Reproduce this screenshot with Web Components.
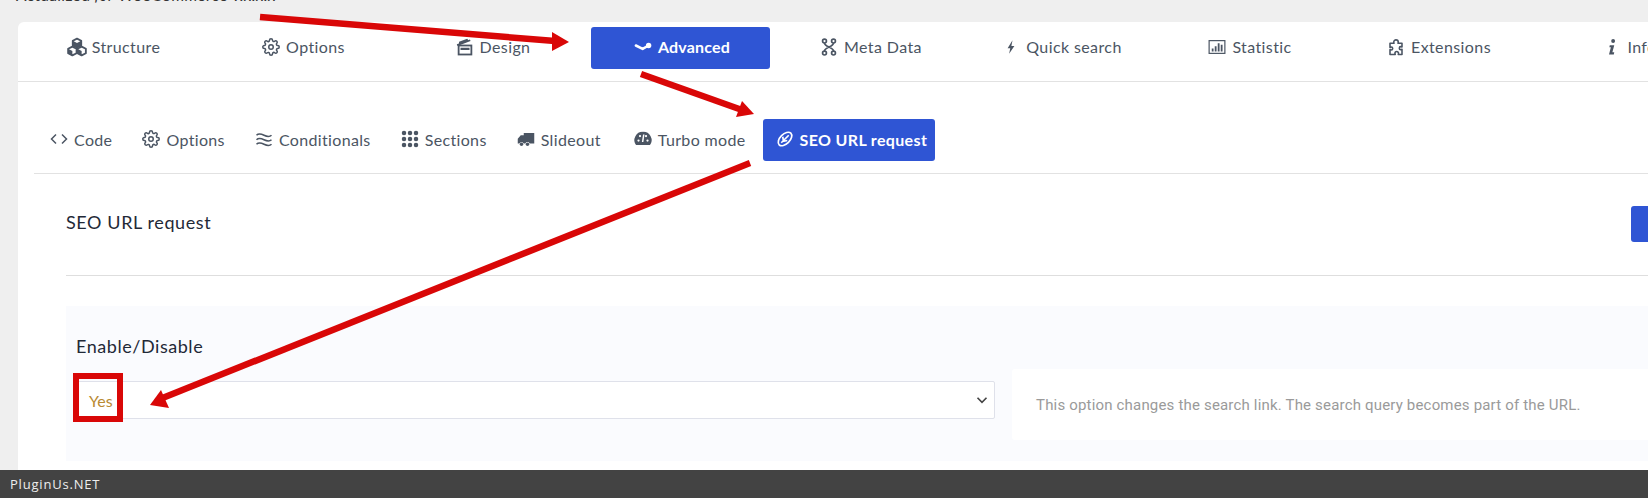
<!DOCTYPE html>
<html>
<head>
<meta charset="utf-8">
<title>SEO URL request</title>
<style>
html, body { margin: 0; height: 498px; overflow: hidden; background: #efefef; }
</style>
</head>
<body>
<plugin-page>
    <div slot="title">Actualized <i>for</i> WooCommerce v.x.x.x</div>
    <main-tabs>
        <nav-tab icon="cubes" style="--w:192px">Structure</nav-tab>
        <nav-tab icon="cog" style="--w:187px">Options</nav-tab>
        <nav-tab icon="clapper" style="--w:192px">Design</nav-tab>
        <nav-tab icon="advanced" active style="--w:179px;--ml:2px">Advanced</nav-tab>
        <nav-tab icon="diagram" style="--w:202px">Meta Data</nav-tab>
        <nav-tab icon="bolt" style="--w:180px">Quick search</nav-tab>
        <nav-tab icon="chart" style="--w:196px">Statistic</nav-tab>
        <nav-tab icon="puzzle" style="--w:182px">Extensions</nav-tab>
        <nav-tab icon="info" style="--w:200px">Info</nav-tab>
    </main-tabs>
    <sub-tabs>
        <sub-tab icon="code">Code</sub-tab>
        <sub-tab icon="cog">Options</sub-tab>
        <sub-tab icon="water">Conditionals</sub-tab>
        <sub-tab icon="dots">Sections</sub-tab>
        <sub-tab icon="truck">Slideout</sub-tab>
        <sub-tab icon="gauge" style="--ml:3px">Turbo mode</sub-tab>
        <sub-tab icon="link" active>SEO URL request</sub-tab>
    </sub-tabs>
    <section-head>SEO URL request</section-head>
    <option-row label="Enable/Disable" value="Yes">This option changes the search link. The search query becomes part of the URL.</option-row>
    <footer-bar slot="footer">PluginUs.NET</footer-bar>
    <arrow-layer slot="overlay"></arrow-layer>
</plugin-page>

<script>
// Icon paths, all on a 24x24 box
const ICONS = {
    cubes: '<g transform="translate(-1.5 -1.5) scale(1.125)"><g fill="none" stroke="currentColor" stroke-width="2.2" stroke-linejoin="round"><path d="M12 2l5 2.6v5.4l-5 2.6-5-2.6V4.6z"/><path d="M6.5 11.5l5 2.6v5.3l-5 2.6-5-2.6v-5.3z"/><path d="M17.5 11.5l5 2.6v5.3l-5 2.6-5-2.6v-5.3z"/></g><path fill="currentColor" d="M7 4.6l5 2.6 5-2.6v5.4l-5 2.6-5-2.6zM1.5 14.1l5 2.6v5.3l-5-2.6zM12.5 14.1l5 2.6v5.3l-5-2.6z"/></g>',
    cog: '<g fill="none" stroke="currentColor" stroke-width="2"><circle cx="12" cy="12" r="3"/><path d="M19.4 15a1.65 1.65 0 0 0 .33 1.82l.06.06a2 2 0 0 1 0 2.83 2 2 0 0 1-2.83 0l-.06-.06a1.65 1.65 0 0 0-1.82-.33 1.65 1.65 0 0 0-1 1.51V21a2 2 0 0 1-2 2 2 2 0 0 1-2-2v-.09A1.65 1.65 0 0 0 9 19.4a1.65 1.65 0 0 0-1.82.33l-.06.06a2 2 0 0 1-2.83 0 2 2 0 0 1 0-2.83l.06-.06a1.65 1.65 0 0 0 .33-1.82 1.65 1.65 0 0 0-1.51-1H3a2 2 0 0 1-2-2 2 2 0 0 1 2-2h.09A1.65 1.65 0 0 0 4.6 9a1.65 1.65 0 0 0-.33-1.82l-.06-.06a2 2 0 0 1 0-2.83 2 2 0 0 1 2.83 0l.06.06a1.65 1.65 0 0 0 1.82.33H9a1.65 1.65 0 0 0 1-1.51V3a2 2 0 0 1 2-2 2 2 0 0 1 2 2v.09a1.65 1.65 0 0 0 1 1.51 1.65 1.65 0 0 0 1.82-.33l.06-.06a2 2 0 0 1 2.83 0 2 2 0 0 1 0 2.83l-.06.06a1.65 1.65 0 0 0-.33 1.82V9a1.65 1.65 0 0 0 1.51 1H21a2 2 0 0 1 2 2 2 2 0 0 1-2 2h-.09a1.65 1.65 0 0 0-1.51 1z"/></g>',
    clapper: '<g fill="none" stroke="currentColor" stroke-width="2.4"><rect x="3.5" y="10" width="17" height="12"/><path d="M1.5 9.5L19 3"/></g><path fill="currentColor" d="M6 13h12v3H6zM4 5l11-4 2 3-13 5z"/>',
    advanced: '<path fill="none" stroke="currentColor" stroke-width="3.4" stroke-linecap="round" stroke-linejoin="round" d="M2.5 10l9 4.5 8-4.5"/><circle cx="19.5" cy="10" r="3.6" fill="currentColor"/>',
    diagram: '<g fill="none" stroke="currentColor" stroke-width="2.2"><circle cx="6" cy="4" r="2.6"/><circle cx="18" cy="4" r="2.6"/><circle cx="6" cy="20" r="2.6"/><circle cx="18" cy="20" r="2.6"/><path d="M6 6.6c0 5 12 6 12 10.8M18 6.6c0 5-12 6-12 10.8"/></g>',
    bolt: '<path fill="currentColor" d="M14 3L7.5 13.5H11L9.5 21l7-10.5h-4z"/>',
    chart: '<g fill="none" stroke="currentColor" stroke-width="1.6"><rect x="1.5" y="3.5" width="21" height="17"/></g><path fill="currentColor" d="M5 14h2.4v4H5zM9 11h2.4v7H9zM13 7h2.4v11H13zM17 9h2.4v9H17z"/>',
    puzzle: '<path fill="none" stroke="currentColor" stroke-width="2.1" stroke-linejoin="round" d="M9 5.5a3 3 0 1 1 6 0c0 .8-.4 1-.4 1.5h5.4v5c-.6 0-1-.5-1.6-.5a2 2 0 0 0 0 4c.6 0 1-.5 1.6-.5V22h-5c0-.5.4-1 .4-1.5a2.4 2.4 0 0 0-4.8 0c0 .5.4 1 .4 1.5H4v-6.5c.6 0 1 .5 1.6.5a2 2 0 0 0 0-4c-.6 0-1 .5-1.6.5V7h5.4c0-.5-.4-.7-.4-1.5z"/>',
    info: '<circle cx="13.5" cy="4" r="2.6" fill="currentColor"/><path fill="currentColor" d="M9 9.5h6l-2.5 9.5H15l-.6 3H8l2.5-9.8H8.500z"/>',
    code: '<path fill="none" stroke="currentColor" stroke-width="2" d="M8 6l-6 6 6 6M16 6l6 6-6 6"/>',
    water: '<path fill="none" stroke="currentColor" stroke-width="2" d="M2 7c3-3 6-2 10 0s7 3 10 0M2 13c3-3 6-2 10 0s7 3 10 0M2 19c3-3 6-2 10 0s7 3 10 0"/>',
    dots: '<g fill="currentColor"><circle cx="4" cy="4" r="3"/><circle cx="12" cy="4" r="3"/><circle cx="20" cy="4" r="3"/><circle cx="4" cy="12" r="3"/><circle cx="12" cy="12" r="3"/><circle cx="20" cy="12" r="3"/><circle cx="4" cy="20" r="3"/><circle cx="12" cy="20" r="3"/><circle cx="20" cy="20" r="3"/></g>',
    truck: '<path fill="currentColor" d="M9 4h14v14h-6.2a3 3 0 0 0-5.6 0H8.800a3 3 0 0 0-4.300-1.500 3 3 0 0 0-1.300 1.500H1v-6.500L5 7h4z"/><circle cx="6" cy="19" r="2.3" fill="currentColor"/><circle cx="14" cy="19" r="2.3" fill="currentColor"/>',
    gauge: '<path fill="currentColor" d="M12 2.500a11 11 0 0 0-9.300 17.500h18.600A11 11 0 0 0 12 2.500z"/><g fill="#fff"><circle cx="6" cy="14" r="1.500"/><circle cx="8" cy="8" r="1.500"/><circle cx="16" cy="8" r="1.500"/><circle cx="18" cy="14" r="1.500"/></g><path stroke="#fff" stroke-width="2" d="M13 6l-1.500 10"/>',
    link: '<g fill="none" stroke="currentColor" stroke-width="2.2"><ellipse cx="12" cy="12" rx="11" ry="6.5" transform="rotate(-45 12 12)"/><path d="M7 17L17 7M9 9l1 6 5-1"/></g>'
};

class UiIcon extends HTMLElement {
    constructor() {
        super();
        this.attachShadow({ mode: 'open' });
    }

    connectedCallback() {
        const size = this.getAttribute('size') || 17;
        this.shadowRoot.innerHTML = `
        <style>
        :host { display: inline-flex; flex: none; }
        svg { display: block; overflow: visible; }
        </style>
        <svg width="${size}" height="${size}" viewBox="0 0 24 24">${ICONS[this.getAttribute('name')] || ''}</svg>
        `;
    }
}
customElements.define('ui-icon', UiIcon);

class PluginPage extends HTMLElement {
    constructor() {
        super();
        this.attachShadow({ mode: 'open' });
        this.shadowRoot.innerHTML = `
        <style>
        :host {
            display: flex;
            flex-direction: column;
            position: relative;
            width: 1648px;
            height: 498px;
            overflow: hidden;
            font-family: Lato, "Liberation Sans", sans-serif;
        }
        .title {
            flex: none;
            height: 35px;
            margin-top: -13px;
            padding-left: 16px;
            font: 15.5px/16px Lato, sans-serif;
            letter-spacing: .35px;
            color: #333;
        }
        .body {
            flex: 1;
            min-height: 0;
            overflow: hidden;
        }
        .card {
            width: 1780px;
            height: 100%;
            margin-left: 18px;
            background: #fff;
            border-radius: 6px 0 0 0;
        }
        </style>
        <div class="title"><slot name="title"></slot></div>
        <div class="body"><div class="card"><slot></slot></div></div>
        <slot name="footer"></slot>
        <slot name="overlay"></slot>
        `;
    }
}
customElements.define('plugin-page', PluginPage);

class MainTabs extends HTMLElement {
    constructor() {
        super();
        this.attachShadow({ mode: 'open' });
        this.shadowRoot.innerHTML = `
        <style>
        :host {
            display: flex;
            align-items: flex-start;
            height: 54px;
            padding-top: 5px;
            border-bottom: 1px solid #e2e2e2;
        }
        </style>
        <slot></slot>
        `;
    }
}
customElements.define('main-tabs', MainTabs);

class NavTab extends HTMLElement {
    constructor() {
        super();
        this.attachShadow({ mode: 'open' });
    }

    connectedCallback() {
        this.shadowRoot.innerHTML = `
        <style>
        :host {
            display: flex;
            flex: none;
            align-items: center;
            justify-content: center;
            gap: 6px;
            box-sizing: border-box;
            width: var(--w);
            height: 42px;
            margin-left: var(--ml, 0);
            padding-bottom: 3px;
            border-radius: 3px;
            color: #4b5563;
            font-size: 16px;
            letter-spacing: .4px;
        }
        :host([active]) {
            padding-left: 3px;
            background: #2f55d4;
            color: #fff;
            font-weight: 700;
            letter-spacing: .2px;
        }
        </style>
        <ui-icon name="${this.getAttribute('icon')}" size="18"></ui-icon>
        <slot></slot>
        `;
    }
}
customElements.define('nav-tab', NavTab);

class SubTabs extends HTMLElement {
    constructor() {
        super();
        this.attachShadow({ mode: 'open' });
        this.shadowRoot.innerHTML = `
        <style>
        :host {
            display: flex;
            align-items: center;
            gap: 8px;
            margin: 37px 0 0 16px;
            padding: 0 0 12px 3px;
            border-bottom: 1px solid #e2e2e2;
        }
        </style>
        <slot></slot>
        `;
    }
}
customElements.define('sub-tabs', SubTabs);

class SubTab extends HTMLElement {
    constructor() {
        super();
        this.attachShadow({ mode: 'open' });
    }

    connectedCallback() {
        this.shadowRoot.innerHTML = `
        <style>
        :host {
            display: flex;
            align-items: center;
            gap: 6px;
            box-sizing: border-box;
            height: 42px;
            margin-left: var(--ml, 0);
            padding: 0 9px 2px 13px;
            border-radius: 3px;
            color: #4b5563;
            font-size: 16px;
            letter-spacing: .35px;
            white-space: nowrap;
        }
        :host([active]) {
            padding-right: 8px;
            background: #2f55d4;
            color: #fff;
            font-weight: 700;
        }
        </style>
        <ui-icon name="${this.getAttribute('icon')}" size="18"></ui-icon>
        <slot></slot>
        `;
    }
}
customElements.define('sub-tab', SubTab);

class SectionHead extends HTMLElement {
    constructor() {
        super();
        this.attachShadow({ mode: 'open' });
        this.shadowRoot.innerHTML = `
        <style>
        :host {
            display: flex;
            align-items: center;
            justify-content: space-between;
            margin: 0 67px 0 48px;
            padding: 32px 0 33px;
            border-bottom: 1px solid #dedede;
            color: #1f2937;
            font-size: 18px;
            letter-spacing: .6px;
        }
        .name { margin-bottom: 5px; }
        .btn {
            width: 100px;
            height: 36px;
            background: #2f55d4;
            border-radius: 3px;
        }
        </style>
        <div class="name"><slot></slot></div>
        <div class="btn"></div>
        `;
    }
}
customElements.define('section-head', SectionHead);

class OptionRow extends HTMLElement {
    constructor() {
        super();
        this.attachShadow({ mode: 'open' });
    }

    connectedCallback() {
        this.shadowRoot.innerHTML = `
        <style>
        :host {
            display: flex;
            align-items: flex-start;
            gap: 17px;
            height: 155px;
            margin: 30px 0 0 48px;
            padding-left: 10px;
            background: #fafbfe;
        }
        .field {
            flex: none;
            width: 919px;
            padding-top: 28px;
        }
        label {
            display: block;
            height: 24px;
            margin-bottom: 23px;
            color: #1f2937;
            font-size: 18px;
            letter-spacing: .55px;
            line-height: 24px;
        }
        .select {
            display: flex;
            align-items: center;
            justify-content: space-between;
            box-sizing: border-box;
            height: 38px;
            padding: 0 6px 0 12px;
            background: #fff;
            border: 1px solid #dfe1ea;
            border-radius: 2px;
            color: #b98a33;
            font-size: 16px;
        }
        .help {
            flex: 1;
            display: flex;
            align-items: center;
            box-sizing: border-box;
            height: 71px;
            margin-top: 63px;
            padding: 0 24px;
            background: #fff;
            border-radius: 3px;
            color: #9a9a9a;
            font: 15px Roboto, sans-serif;
            letter-spacing: .18px;
        }
        </style>
        <div class="field">
            <label>${this.getAttribute('label')}</label>
            <div class="select">
                <span>${this.getAttribute('value')}</span>
                <svg width="12" height="12" viewBox="0 0 16 16"><path fill="none" stroke="#444" stroke-width="2.2" d="M2 5l6 6 6-6"/></svg>
            </div>
        </div>
        <div class="help"><slot></slot></div>
        `;
    }
}
customElements.define('option-row', OptionRow);

class FooterBar extends HTMLElement {
    constructor() {
        super();
        this.attachShadow({ mode: 'open' });
        this.shadowRoot.innerHTML = `
        <style>
        :host {
            display: flex;
            align-items: center;
            flex: none;
            height: 28px;
            padding-left: 10px;
            background: #434343;
            color: #eee;
            font: 13px "Open Sans", sans-serif;
            letter-spacing: .8px;
        }
        </style>
        <slot></slot>
        `;
    }
}
customElements.define('footer-bar', FooterBar);

// Red annotation arrows drawn over the whole screenshot
class ArrowLayer extends HTMLElement {
    constructor() {
        super();
        this.attachShadow({ mode: 'open' });
        this.shadowRoot.innerHTML = `
        <style>
        :host { position: absolute; left: 0; top: 0; pointer-events: none; }
        svg { display: block; }
        </style>
        <svg width="1648" height="498" viewBox="0 0 1648 498">
            <g stroke="#d90707" fill="none">
                <path stroke-width="6.5" d="M260 17L555 41"/>
                <path stroke-width="6.5" d="M641 74L742 110"/>
                <path stroke-width="6.5" d="M750 163L160 399"/>
                <rect stroke-width="6" x="76" y="376" width="44" height="43"/>
            </g>
            <g fill="#d90707">
                <path d="M569 42L552 32L552 51Z"/>
                <path d="M754 114L742 101L736 117Z"/>
                <path d="M150 405L161 390L169 408Z"/>
            </g>
        </svg>
        `;
    }
}
customElements.define('arrow-layer', ArrowLayer);
</script>
</body>
</html>
